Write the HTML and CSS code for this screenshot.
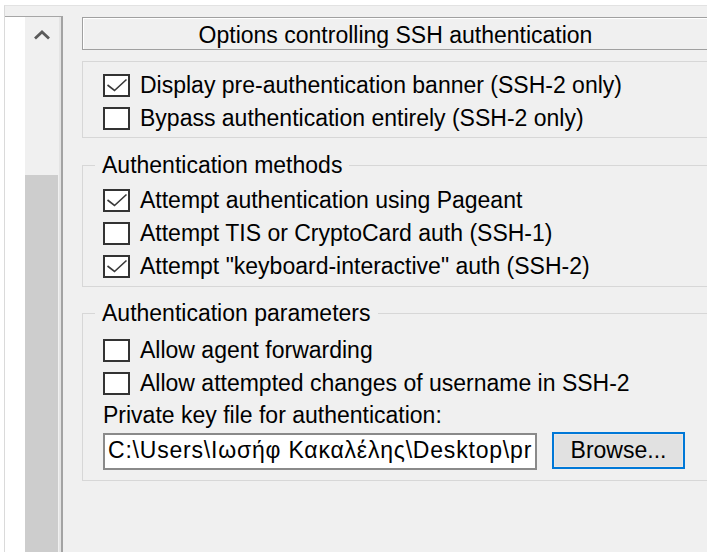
FILE: index.html
```html
<!DOCTYPE html>
<html lang="en">
<head>
<meta charset="utf-8">
<title>SSH authentication</title>
<link rel="stylesheet" href="styles.css">
</head>
<body>
<div class="window">
  <div class="tree">
    <div class="tree-list"></div>
    <div class="scrollbar">
      <div class="sb-arrow">
        <svg width="18" height="10" viewBox="0 0 18 10"><path d="M2 8.5 L9 2 L16 8.5" fill="none" stroke="#5a5a5a" stroke-width="2.8"/></svg>
      </div>
      <div class="sb-track"></div>
      <div class="sb-thumb"></div>
    </div>
  </div>
  <div class="panel">
    <div class="header">Options controlling SSH authentication</div>

    <fieldset class="group group-plain">
      <div class="row"><span class="cb"><svg width="23" height="19" viewBox="0 0 23 19"><path d="M2.5 9 L9.5 14.5 L21.5 3.5" fill="none" stroke="#3a3a3a" stroke-width="1.6"/></svg></span><span>Display pre-authentication banner (SSH-2 only)</span></div>
      <div class="row"><span class="cb"></span><span>Bypass authentication entirely (SSH-2 only)</span></div>
    </fieldset>

    <fieldset class="group group-methods">
      <legend>Authentication methods</legend>
      <div class="row"><span class="cb"><svg width="23" height="19" viewBox="0 0 23 19"><path d="M2.5 9 L9.5 14.5 L21.5 3.5" fill="none" stroke="#3a3a3a" stroke-width="1.6"/></svg></span><span>Attempt authentication using Pageant</span></div>
      <div class="row"><span class="cb"></span><span>Attempt TIS or CryptoCard auth (SSH-1)</span></div>
      <div class="row"><span class="cb"><svg width="23" height="19" viewBox="0 0 23 19"><path d="M2.5 9 L9.5 14.5 L21.5 3.5" fill="none" stroke="#3a3a3a" stroke-width="1.6"/></svg></span><span>Attempt "keyboard-interactive" auth (SSH-2)</span></div>
    </fieldset>

    <fieldset class="group group-params">
      <legend>Authentication parameters</legend>
      <div class="row"><span class="cb"></span><span>Allow agent forwarding</span></div>
      <div class="row"><span class="cb"></span><span>Allow attempted changes of username in SSH-2</span></div>
      <div class="field-label">Private key file for authentication:</div>
      <div class="file-row">
        <div class="textbox">C:\Users\Ιωσήφ Κακαλέλης\Desktop\pr</div>
        <div class="button">Browse...</div>
      </div>
    </fieldset>
  </div>
</div>
</body>
</html>
```

FILE: styles.css
```css
html, body {
  margin: 0;
  padding: 0;
  background: #ffffff;
}

body {
  font-family: "Liberation Sans", Arial, sans-serif;
  font-size: 23px;
  color: #000;
}

.window {
  box-sizing: border-box;
  margin: 5px 0 0 4px;
  width: 703px;
  height: 547px;
  background: #f0f0f0;
  border-top: 1px solid #e2e2e2;
  border-left: 1px solid #dadada;
  display: flex;
  overflow: hidden;
}

/* left tree view with scrollbar */
.tree {
  flex: none;
  margin-top: 10px;
  display: flex;
  border-top: 1px solid #a6a6a6;
  border-right: 2px solid #a3a3a3;
}

.tree-list {
  width: 20px;
  background: #ffffff;
}

.scrollbar {
  width: 34px;
  border-right: 2px solid #e4e4e4;
  display: flex;
  flex-direction: column;
  background: #f0f0f0;
}

.sb-arrow {
  height: 36px;
  display: flex;
  align-items: center;
  justify-content: center;
  padding-right: 1px;
}

.sb-track {
  height: 122px;
}

.sb-thumb {
  flex: 1;
  background: #cdcdcd;
  margin-right: 1px;
}

/* right options panel */
.panel {
  flex: none;
  margin-left: 19px;
  width: 640px;
  padding-top: 11px;
  display: flex;
  flex-direction: column;
}

.header {
  box-sizing: border-box;
  width: 627px;
  height: 33px;
  border: 1px solid #a0a0a0;
  box-shadow: inset 1px 1px 0 #ffffff;
  text-align: center;
  line-height: 30px;
  padding-top: 2px;
  white-space: nowrap;
}

.group {
  box-sizing: border-box;
  width: 640px;
  margin: 0;
  border: 1px solid #d7d7d7;
  min-inline-size: 0;
}

.group legend {
  padding: 0 7px;
  margin-left: -8px;
  line-height: 33px;
}

.group-plain {
  margin-top: 11px;
  padding: 7px 0 2px 20px;
}

.group-methods {
  margin-top: 11px;
  padding: 2px 0 3px 20px;
}

.group-params {
  margin-top: 10px;
  padding: 4px 0 10px 20px;
}

.row {
  display: flex;
  align-items: center;
  height: 33px;
  white-space: nowrap;
}

.cb {
  box-sizing: border-box;
  flex: none;
  width: 27px;
  height: 23px;
  border: 2px solid #333333;
  background: #ffffff;
  margin-right: 10px;
  display: flex;
}

.field-label {
  line-height: 30px;
  white-space: nowrap;
}

.file-row {
  margin-top: 3px;
  display: flex;
  gap: 15px;
  align-items: flex-start;
}

.textbox {
  box-sizing: border-box;
  width: 434px;
  height: 37px;
  border: 2px solid #8a8a8a;
  background: #ffffff;
  padding-left: 3px;
  line-height: 31px;
  letter-spacing: 0.8px;
  white-space: nowrap;
  overflow: hidden;
}

.button {
  box-sizing: border-box;
  width: 133px;
  height: 37px;
  margin-top: -1px;
  border: 2px solid #0078d7;
  background: #e1e1e1;
  box-shadow: inset 0 0 0 1px #e8e8e8;
  text-align: center;
  line-height: 33px;
  white-space: nowrap;
}
```
